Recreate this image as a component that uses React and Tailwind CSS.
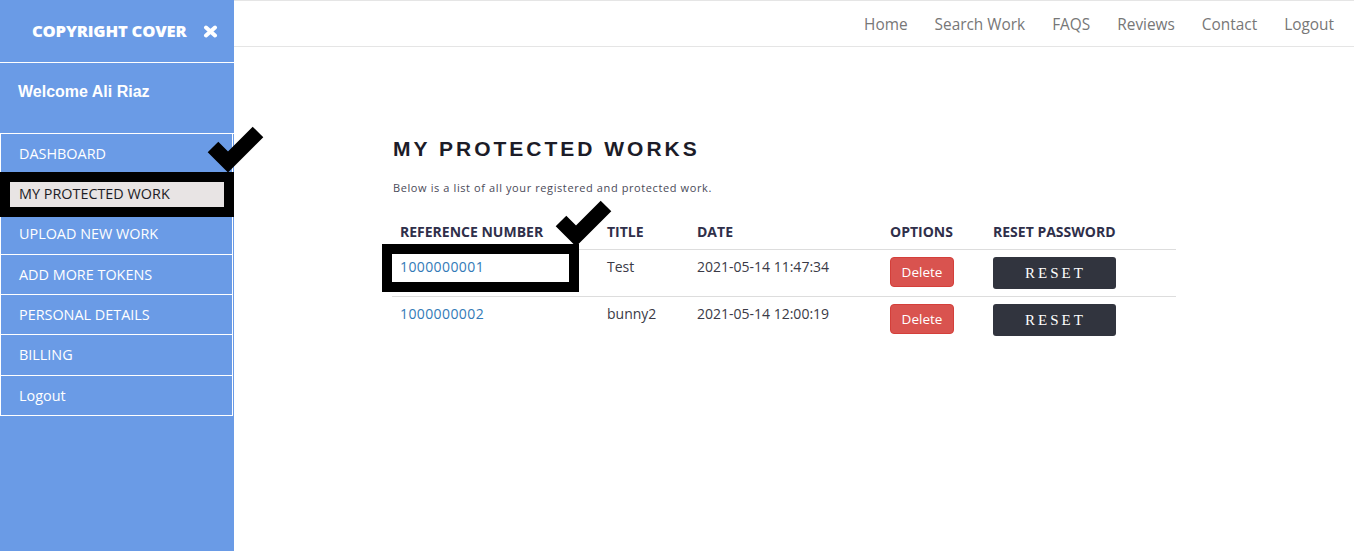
import React from "react";

const poppins = "font-['Open_Sans',sans-serif]";

function Check({ className }) {
  return (
    <svg
      className={className}
      width="60"
      height="58"
      viewBox="0 0 60 58"
      style={{ overflow: "visible" }}
    >
      <polyline
        points="7,29 22,44 52,14"
        fill="none"
        stroke="#000"
        strokeWidth="15"
        strokeLinejoin="miter"
        strokeLinecap="butt"
      />
    </svg>
  );
}

const menu = [
  "DASHBOARD",
  "MY PROTECTED WORK",
  "UPLOAD NEW WORK",
  "ADD MORE TOKENS",
  "PERSONAL DETAILS",
  "BILLING",
  "Logout",
];

const rows = [
  { ref: "1000000001", title: "Test", date: "2021-05-14 11:47:34" },
  { ref: "1000000002", title: "bunny2", date: "2021-05-14 12:00:19" },
];

export default function App() {
  return (
    <div className="relative flex h-[551px] w-[1354px] overflow-hidden bg-white">
      {/* Sidebar */}
      <aside className="flex w-[234px] shrink-0 flex-col bg-[#6a9be6] text-white">
        <div className="flex h-[63px] items-center border-b border-white pl-[32px] pt-[1px]">
          <span className={`${poppins} text-[16.6px] font-extrabold tracking-[-0.2px]`}>
            COPYRIGHT COVER
          </span>
          <svg className="ml-[17px]" width="15" height="13" viewBox="0 0 15 13">
            <path
              d="M3 2.5 L12 10.5 M12 2.5 L3 10.5"
              stroke="#fff"
              strokeWidth="4"
              strokeLinecap="round"
            />
          </svg>
        </div>
        <div className="h-[71px] border-b border-white pl-[18px] pt-[16px]">
          <span className="font-['Liberation_Sans',Arial,sans-serif] text-[16px] font-bold leading-[18px]">
            Welcome Ali Riaz
          </span>
        </div>
        <ul className="w-[233px]">
          {menu.map((m) => {
            const active = m === "MY PROTECTED WORK";
            return (
              <li
                key={m}
                className={`flex h-[40.3px] items-center border-x border-b border-white pl-[18px] ${poppins} text-[14.4px] ${
                  active ? "bg-[#e8e4e4] text-[#1c1c24]" : "text-white"
                }`}
              >
                {m}
              </li>
            );
          })}
        </ul>
      </aside>

      {/* Main */}
      <div className="flex min-w-0 flex-1 flex-col">
        <header className="flex h-[47px] items-center justify-end gap-[27px] border-y border-[#e5e5e5] pr-[20px] pt-[2px]">
          {["Home", "Search Work", "FAQS", "Reviews", "Contact", "Logout"].map((l) => (
            <a key={l} className={`${poppins} text-[15.4px] text-[#777]`}>
              {l}
            </a>
          ))}
        </header>

        <main className="pl-[159px] pt-[91px]">
          <h1 className="font-['Liberation_Sans',Arial,sans-serif] text-[21px] font-bold leading-[21px] tracking-[3px] text-[#1c1c28]">
            MY PROTECTED WORKS
          </h1>
          <p className={`${poppins} mt-[21px] text-[11px] leading-[16px] tracking-[0.6px] text-[#4a4a58]`}>
            Below is a list of all your registered and protected work.
          </p>

          <table className="-ml-px mt-[19px] w-[784px] table-fixed border-separate border-spacing-0">
            <colgroup>
              <col className="w-[207px]" />
              <col className="w-[90px]" />
              <col className="w-[193px]" />
              <col className="w-[103px]" />
              <col className="w-[191px]" />
            </colgroup>
            <thead>
              <tr>
                {["REFERENCE NUMBER", "TITLE", "DATE", "OPTIONS", "RESET PASSWORD"].map((h) => (
                  <th
                    key={h}
                    className={`${poppins} border-b border-[#dddddd] px-2 py-[7px] text-left align-top text-[14px] font-bold leading-[20px] text-[#2f2f4a]`}
                  >
                    {h}
                  </th>
                ))}
              </tr>
            </thead>
            <tbody>
              {rows.map((r, i) => {
                const b = i > 0 ? "border-t border-[#dddddd]" : "";
                const td = `${b} px-2 py-[7px] align-top ${poppins} text-[14px] leading-[20px]`;
                return (
                  <tr key={r.ref}>
                    <td className={`${td} tracking-[0.4px] text-[#337ab7]`}>{r.ref}</td>
                    <td className={`${td} text-[#3a3a46]`}>{r.title}</td>
                    <td className={`${td} text-[#3a3a46]`}>{r.date}</td>
                    <td className={td}>
                      <button className="flex h-[30px] w-[64px] items-center justify-center rounded-[4px] border border-[#d43f3a] bg-[#d9534f] text-[13.5px] text-white">
                        Delete
                      </button>
                    </td>
                    <td className={td}>
                      <button className="flex h-[32px] w-[123px] items-center justify-center rounded-[3px] bg-[#31343e] pl-[2px] font-['Liberation_Serif',serif] text-[15px] tracking-[3px] text-white">
                        RESET
                      </button>
                    </td>
                  </tr>
                );
              })}
            </tbody>
          </table>
        </main>
      </div>

      {/* Annotation overlays */}
      <div className="pointer-events-none absolute left-0 top-[172px] h-[45px] w-[234px] border-[10px] border-black" />
      <Check className="pointer-events-none absolute left-[206px] top-[118px]" />
      <div className="pointer-events-none absolute left-[382px] top-[244px] h-[48px] w-[197px] border-[10px] border-black" />
      <Check className="pointer-events-none absolute left-[554px] top-[192px]" />
    </div>
  );
}
